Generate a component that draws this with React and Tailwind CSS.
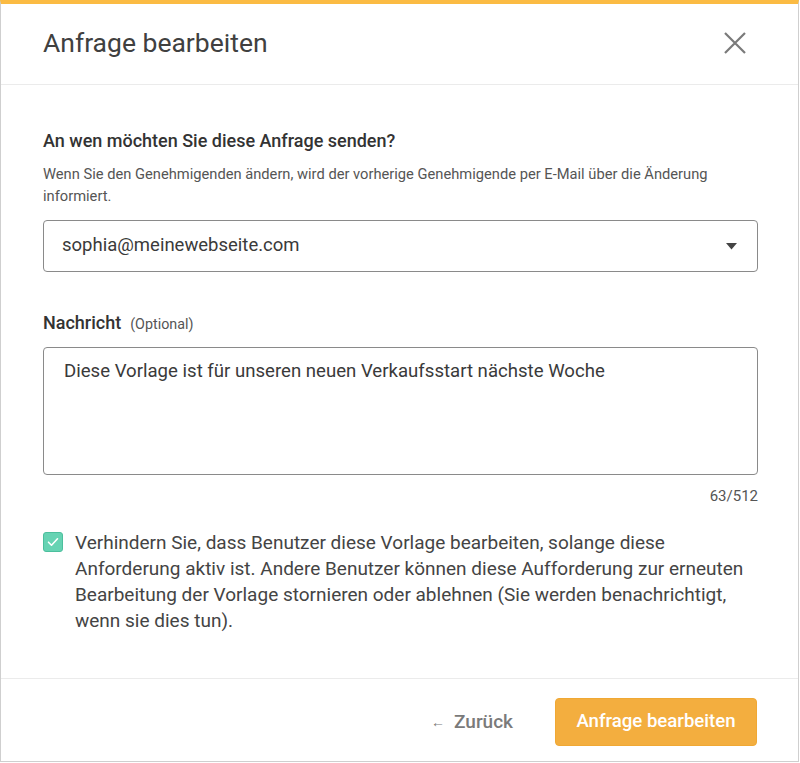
import React from 'react';

export default function App() {
    return (
        <div className="w-[800px] h-[763px] bg-white" style={{ fontFamily: 'Roboto, "Liberation Sans", sans-serif' }}>
            <div className="w-[799px] h-[762px] flex flex-col border-t-4 border-t-[#fbbb43] border-x border-b border-x-[#cfcfcf] border-b-[#cfcfcf]">
                {/* header */}
                <header className="h-[81px] flex-shrink-0 flex items-center justify-between pl-[42px] pr-[52px] border-b border-[#ebebeb]">
                    <h1 className="text-[26.5px] text-[#404040] -mt-[2px]">Anfrage bearbeiten</h1>
                    <svg width="22" height="22" viewBox="0 0 22 22" className="-mt-[2px]">
                        <path d="M1 1 21 21M21 1 1 21" stroke="#7a7a7a" strokeWidth="2.2" fill="none" />
                    </svg>
                </header>

                {/* body */}
                <main className="flex-1 px-[42px] pt-[44px]">
                    <h2 className="text-[18px] leading-[24px] font-medium text-[#333]">An wen möchten Sie diese Anfrage senden?</h2>
                    <p className="mt-[10px] w-[715px] text-[14.7px] leading-[22px] text-[#555]">
                        Wenn Sie den Genehmigenden ändern, wird der vorherige Genehmigende per E-Mail über die Änderung informiert.
                    </p>
                    <div className="mt-[13px] h-[52px] w-[715px] border border-[#8a8a8a] rounded-[4px] flex items-center justify-between pl-[18px] pr-[20px]">
                        <span className="text-[18.5px] text-[#3a3a3a]">sophia@meinewebseite.com</span>
                        <svg width="11" height="7" viewBox="0 0 11 7" className="mt-[1px]">
                            <path d="M0 0h11L5.5 6.5z" fill="#444" />
                        </svg>
                    </div>

                    <div className="mt-[39px] flex items-baseline gap-[9px]">
                        <span className="text-[18px] leading-[24px] font-medium text-[#333]">Nachricht</span>
                        <span className="text-[14.3px] text-[#555]">(Optional)</span>
                    </div>
                    <div className="mt-[12px] h-[128px] w-[715px] border border-[#8a8a8a] rounded-[4px] pl-[20px] pt-[11px]">
                        <p className="text-[18.6px] leading-[24px] text-[#3a3a3a]">Diese Vorlage ist für unseren neuen Verkaufsstart nächste Woche</p>
                    </div>
                    <div className="w-[715px] text-right text-[15px] leading-[18px] text-[#555] mt-[12px]">63/512</div>

                    <div className="mt-[25px] flex items-start gap-[12px] w-[715px]">
                        <div className="mt-[2px] h-[20px] w-[20px] flex-shrink-0 rounded-[3px] bg-[#66d3b3] border border-[#4cbf9d] flex items-center justify-center">
                            <svg width="12" height="10" viewBox="0 0 12 10">
                                <path d="M1.5 5.2 4.5 8.2 10.5 1.8" fill="none" stroke="white" strokeWidth="1.6" strokeLinecap="round" strokeLinejoin="round" />
                            </svg>
                        </div>
                        <p className="text-[19px] leading-[26px] text-[#444]">
                            Verhindern Sie, dass Benutzer diese Vorlage bearbeiten, solange diese Anforderung aktiv ist. Andere Benutzer können diese Aufforderung zur erneuten Bearbeitung der Vorlage stornieren oder ablehnen (Sie werden benachrichtigt, wenn sie dies tun).
                        </p>
                    </div>
                </main>

                {/* footer */}
                <footer className="h-[83px] flex-shrink-0 border-t border-[#ebebeb] flex items-center justify-end gap-[42px] pr-[41px] pt-[4px]">
                    <button className="flex items-center gap-[9px] text-[19px] font-medium text-[#7a7a7a]">
                        <span className="text-[14px]">←</span>
                        Zurück
                    </button>
                    <button className="h-[48px] w-[202px] rounded-[4px] bg-[#f3ae3f] border border-[#f0a834] text-white text-[18.6px] font-medium">
                        Anfrage bearbeiten
                    </button>
                </footer>
            </div>
        </div>
    );
}
